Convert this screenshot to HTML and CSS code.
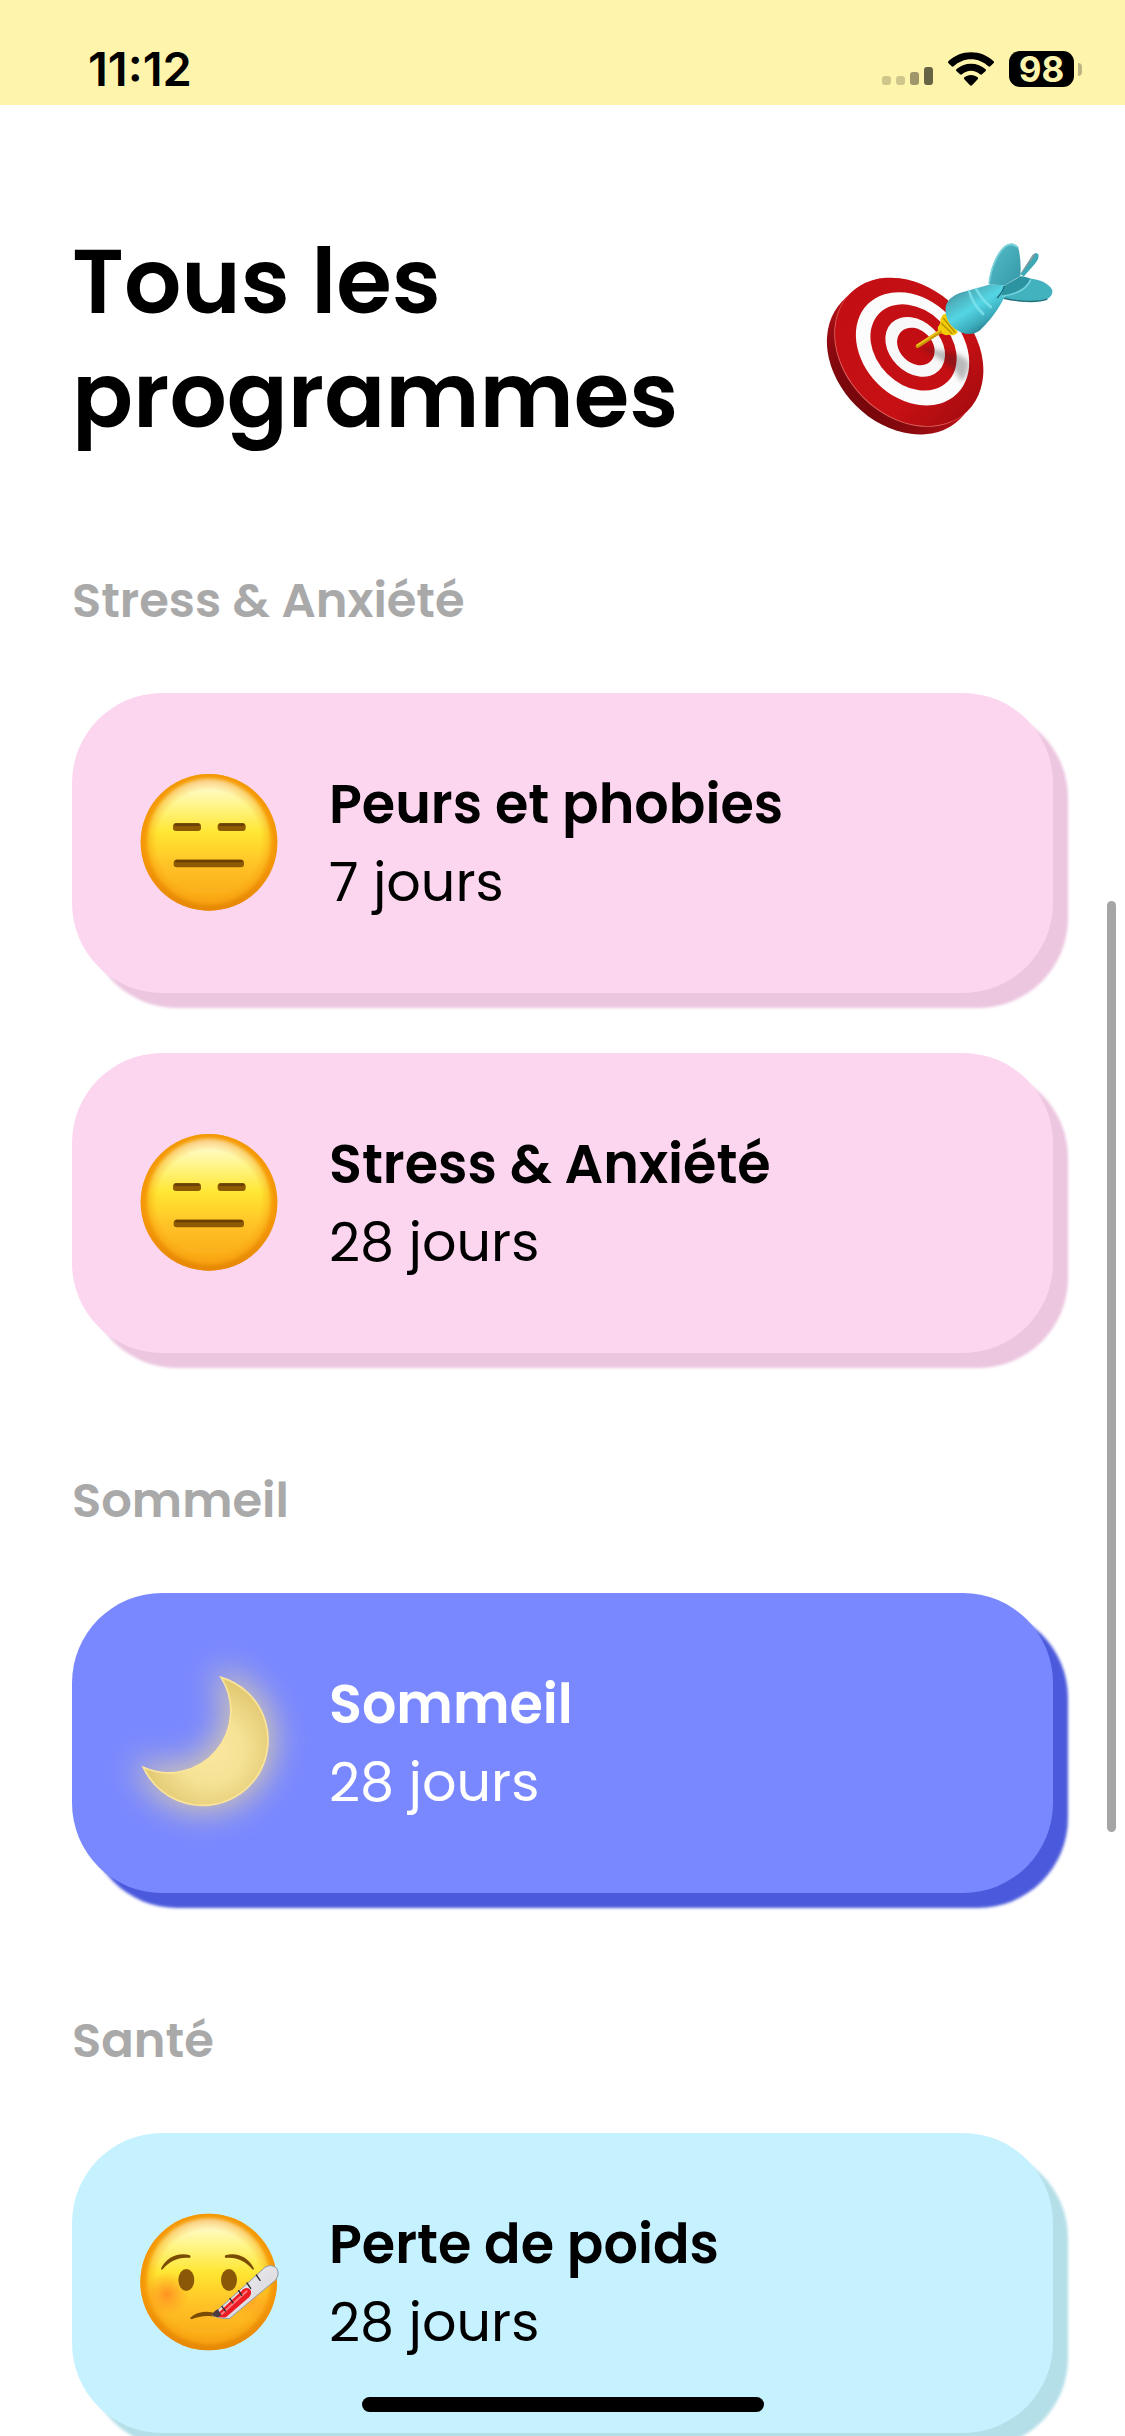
FILE: index.html
```html
<!DOCTYPE html>
<html lang="fr">
<head>
<meta charset="utf-8">
<meta name="viewport" content="width=device-width, initial-scale=1">
<title>Tous les programmes</title>
<link rel="stylesheet" href="styles.css">
</head>
<body>
<div class="status-bar">
  <span class="time">11:12</span>
  <div class="indicators">
    <svg class="signal" viewBox="0 0 51 18" aria-hidden="true">
      <rect x="0" y="9" width="9" height="9" rx="3" fill="#cfc68b"/>
      <rect x="14" y="9" width="9" height="9" rx="3" fill="#cfc68b"/>
      <rect x="28" y="5" width="9" height="13" rx="3" fill="#9f966a"/>
      <rect x="42" y="0" width="9" height="18" rx="3" fill="#676345"/>
    </svg>
    <svg class="wifi" viewBox="264 154 138 102" aria-hidden="true">
      <path d="M333 155C359 155 383 165 401 182Q403 185 401 187L391 197Q388 199 385 197C371 184 353 176 333 176S295 184 281 197Q278 199 275 197L265 187Q263 185 265 182C283 165 307 155 333 155Z"/>
      <path d="M333 189C350 189 365 195 377 206Q379 209 377 211L366 221Q363 223 360 221C352 214 343 210 333 210S314 214 306 221Q303 223 300 221L289 211Q287 209 289 206C301 195 316 189 333 189Z"/>
      <path d="M333 223C341 223 348 226 353 230Q356 233 353 236L336 254Q333 256 330 254L313 236Q310 233 313 230C318 226 325 223 333 223Z"/>
    </svg>
    <div class="battery"><span class="battery-level">98</span><span class="battery-tip"></span></div>
  </div>
</div>

<main class="content">
  <header class="page-header">
    <h1 class="title">Tous les programmes</h1>
    <svg class="target" viewBox="78 60 682 590" aria-hidden="true">
      <defs>
        <linearGradient id="side" x1="0" y1="0" x2="0" y2="1">
          <stop offset="0" stop-color="#b30d12"/><stop offset=".35" stop-color="#d3161b"/><stop offset="1" stop-color="#75060b"/>
        </linearGradient>
        <linearGradient id="front" x1="0" y1="0" x2="1" y2="0">
          <stop offset="0" stop-color="#c30f14"/><stop offset=".7" stop-color="#c61014"/><stop offset="1" stop-color="#a90c10"/>
        </linearGradient>
        <linearGradient id="barrel" gradientUnits="userSpaceOnUse" x1="470" y1="200" x2="550" y2="330">
          <stop offset="0" stop-color="#3b8f9b"/><stop offset=".22" stop-color="#4fb4c0"/><stop offset=".5" stop-color="#54d5e4"/><stop offset=".8" stop-color="#3cadbd"/><stop offset="1" stop-color="#28808e"/>
        </linearGradient>
        <linearGradient id="fin" x1="0" y1="0" x2="1" y2="1">
          <stop offset="0" stop-color="#58bdc9"/><stop offset="1" stop-color="#3499a6"/>
        </linearGradient>
        <clipPath id="board"><ellipse cx="328" cy="392" rx="249" ry="193" transform="rotate(45 328 392)"/></clipPath>
        <filter id="soft"><feGaussianBlur stdDeviation="8"/></filter>
      </defs>
      <g fill="url(#side)">
        <ellipse cx="304" cy="417" rx="250" ry="193" transform="rotate(45 304 417)"/>
        <ellipse cx="315" cy="405" rx="250" ry="193" transform="rotate(45 315 405)"/>
      </g>
      <ellipse cx="326" cy="394" rx="250" ry="193" transform="rotate(45 326 394)" fill="#e1605f"/>
      <ellipse cx="328" cy="392" rx="249" ry="193" transform="rotate(45 328 392)" fill="url(#front)"/>
      <ellipse cx="338" cy="383" rx="190" ry="148" transform="rotate(45 338 383)" fill="#fcfcfc"/>
      <ellipse cx="341" cy="379" rx="145" ry="112" transform="rotate(45 341 379)" fill="#c40f14"/>
      <ellipse cx="346" cy="377" rx="101" ry="77" transform="rotate(45 346 377)" fill="#f8f8f8"/>
      <ellipse cx="348" cy="376" rx="63" ry="49" transform="rotate(45 348 376)" fill="#c20e13"/>
      <g clip-path="url(#board)"><path d="M354 376L420 388C455 395 500 400 508 430Q505 460 485 482Q465 440 415 410Z" fill="#222" opacity=".3" filter="url(#soft)"/></g>
      <path d="M428 282Q436 274 446 280L474 334Q464 346 448 341Q436 345 428 338Q412 334 414 318Q424 304 422 294Z" fill="#f2cd08"/>
      <path d="M424 306L458 338M430 290L466 334" stroke="#b38c00" stroke-width="4" fill="none"/>
      <path d="M353 375L420 332" stroke="#c79a05" stroke-width="11" stroke-linecap="round"/>
      <path d="M352 372L420 328" stroke="#f2c51c" stroke-width="5" stroke-linecap="round"/>
      <path d="M662 158L700 100Q710 90 716 100Q719 112 704 130L672 166Z" fill="#3da9b5"/>
      <path d="M662 158L700 100L708 99L672 148Z" fill="#8c9a9d"/>
      <path d="M568 190C570 145 590 95 615 74Q640 58 655 78C662 100 664 135 662 164L615 192Z" fill="url(#fin)"/>
      <path d="M568 188C572 142 594 93 617 75Q638 62 653 78" fill="none" stroke="#7bd2dc" stroke-width="5"/>
      <path d="M690 172C720 174 748 188 757 205Q762 222 742 234C705 246 645 240 612 231L625 206Z" fill="#42b2be"/>
      <path d="M612 231C650 240 710 246 743 234" fill="none" stroke="#246f7a" stroke-width="4"/>
      <path d="M437 268C436 240 455 222 490 212L570 190L616 192L614 228C598 262 568 302 540 328Q515 346 485 334C455 322 438 298 437 268Z" fill="url(#barrel)"/>
      <path d="M508 210Q520 252 550 278M529 203Q548 238 573 257" fill="none" stroke="#7fe4ee" stroke-width="8" stroke-linecap="round" opacity=".8"/>
      <path d="M616 192L662 165Q682 166 694 174C684 204 646 222 604 226Z" fill="#2c93a0"/>
      <path d="M606 225C645 220 681 204 693 175" fill="none" stroke="#77d5df" stroke-width="5"/>
      <path d="M614 194Q608 215 592 230" fill="none" stroke="#1c6570" stroke-width="4"/>
    </svg>
  </header>

  <section class="group">
    <h2 class="group-title">Stress &amp; Anxiété</h2>
    <a class="card card-pink" href="#phobies">
      <svg class="icon" viewBox="0 0 432 432" aria-hidden="true">
        <defs>
          <linearGradient id="rim" x1="0" y1="0" x2="0" y2="1">
            <stop offset="0" stop-color="#fbb106"/><stop offset=".6" stop-color="#fba80f"/><stop offset="1" stop-color="#d98204"/>
          </linearGradient>
          <linearGradient id="skin" x1="0" y1="0" x2="0" y2="1">
            <stop offset="0" stop-color="#fffce4"/><stop offset=".2" stop-color="#fff68f"/><stop offset=".43" stop-color="#ffe631"/><stop offset=".7" stop-color="#ffc026"/><stop offset="1" stop-color="#f9a714"/>
          </linearGradient>
          <radialGradient id="edge">
            <stop offset=".76" stop-color="#f79a08" stop-opacity="0"/><stop offset="1" stop-color="#ef8a04" stop-opacity=".7"/>
          </radialGradient>
          <filter id="blend" x="-10%" y="-10%" width="120%" height="120%"><feGaussianBlur stdDeviation="5"/></filter>
          <g id="face">
            <circle cx="216" cy="214" r="205" fill="url(#rim)"/>
            <ellipse cx="216" cy="212" rx="186" ry="190" fill="url(#skin)" filter="url(#blend)"/>
            <circle cx="216" cy="214" r="205" fill="url(#edge)"/>
          </g>
          <g id="neutral">
            <use href="#face"/>
            <g fill="#8d5a02">
              <rect x="108" y="157" width="84" height="23" rx="9"/>
              <rect x="242" y="157" width="84" height="23" rx="9"/>
              <rect x="110" y="266" width="211" height="23" rx="9"/>
            </g>
            <g fill="#6a3f00">
              <rect x="112" y="157" width="76" height="8" rx="4"/>
              <rect x="246" y="157" width="76" height="8" rx="4"/>
              <rect x="114" y="266" width="203" height="8" rx="4"/>
            </g>
          </g>
        </defs>
        <use href="#neutral"/>
      </svg>
      <span class="card-text"><strong class="card-name">Peurs et phobies</strong><span class="card-length">7 jours</span></span>
    </a>
    <a class="card card-pink" href="#stress">
      <svg class="icon" viewBox="0 0 432 432" aria-hidden="true"><use href="#neutral"/></svg>
      <span class="card-text"><strong class="card-name">Stress &amp; Anxiété</strong><span class="card-length">28 jours</span></span>
    </a>
  </section>

  <section class="group">
    <h2 class="group-title">Sommeil</h2>
    <a class="card card-blue" href="#sommeil">
      <svg class="icon" viewBox="51 93 432 432" aria-hidden="true">
        <defs>
          <radialGradient id="moon" gradientUnits="userSpaceOnUse" cx="270" cy="330" r="200">
            <stop offset="0" stop-color="#fbe8a0"/><stop offset=".5" stop-color="#f5e295"/><stop offset="1" stop-color="#e3ca74"/>
          </radialGradient>
          <filter id="glow" filterUnits="userSpaceOnUse" x="-150" y="-100" width="820" height="820" color-interpolation-filters="sRGB"><feGaussianBlur stdDeviation="48"/></filter>
          <path id="crescent" d="M303 112A196 196 0 1 1 70 382A186 186 0 0 0 303 112Z"/>
        </defs>
        <use href="#crescent" fill="#f0dc96" stroke="#f0dc96" stroke-width="40" stroke-linejoin="round" opacity=".75" filter="url(#glow)"/>
        <use href="#crescent" fill="url(#moon)" stroke="#fbe59b" stroke-width="5"/>
      </svg>
      <span class="card-text"><strong class="card-name">Sommeil</strong><span class="card-length">28 jours</span></span>
    </a>
  </section>

  <section class="group">
    <h2 class="group-title">Santé</h2>
    <a class="card card-cyan" href="#poids">
      <svg class="icon" viewBox="21 33 432 432" aria-hidden="true">
        <defs>
          <radialGradient id="blush"><stop offset="0" stop-color="#ff7a1e" stop-opacity=".7"/><stop offset="1" stop-color="#ff8a1e" stop-opacity="0"/></radialGradient>
          <linearGradient id="glass" x1="0" y1="0" x2="1" y2="1"><stop offset="0" stop-color="#f4f4f6"/><stop offset=".6" stop-color="#dedee3"/><stop offset="1" stop-color="#a3a7b0"/></linearGradient>
        </defs>
        <use href="#face" x="20" y="32"/>
        <circle cx="110" cy="282" r="66" fill="url(#blush)"/>
        <circle cx="362" cy="300" r="60" fill="url(#blush)" opacity=".6"/>
        <g fill="#7a4b03">
          <path d="M93 206C108 172 145 155 180 166Q184 172 178 174C145 171 120 183 98 208Q93 210 93 206Z"/>
          <path d="M372 206C357 172 320 155 286 166Q282 172 288 174C320 171 345 183 367 208Q373 210 372 206Z"/>
          <path d="M180 354C200 334 230 330 262 341L262 351C232 345 205 349 184 358Z"/>
        </g>
        <ellipse cx="169" cy="240" rx="24" ry="33" fill="#8a5806"/>
        <ellipse cx="297" cy="240" rx="24" ry="33" fill="#8a5806"/>
        <path d="M246 346L405 202Q425 190 440 205Q450 222 437 240L298 356Q268 357 246 346Z" fill="url(#glass)" stroke="#9097a2" stroke-width="3"/>
        <path d="M256 347L340 268Q352 260 361 269Q367 280 357 292L288 352Q268 354 256 347Z" fill="#ed1b24"/>
        <path d="M275 342L350 274" stroke="#ff7a7d" stroke-width="6" stroke-linecap="round"/>
        <path d="M246 346Q252 332 264 328L274 346L262 352Z" fill="#4b3d42"/>
        <path d="M276 319L286 333M300 295L309 309M326 272L335 286M351 249L362 265M379 225L390 241" stroke="#2b2b30" stroke-width="4" stroke-linecap="round"/>
      </svg>
      <span class="card-text"><strong class="card-name">Perte de poids</strong><span class="card-length">28 jours</span></span>
    </a>
  </section>
</main>

<div class="scroll-thumb"></div>
<div class="home-indicator"></div>
</body>
</html>
```
FILE: styles.css
```css
* {
  box-sizing: border-box;
}

body {
  margin: 0;
  height: 100vh;
  display: flex;
  flex-direction: column;
  background: #fff;
  color: #000;
  font-family: Poppins, Inter, "Liberation Sans", sans-serif;
}

/* Status bar */
.status-bar {
  flex: none;
  display: flex;
  justify-content: space-between;
  align-items: flex-end;
  height: 105px;
  padding: 0 43px 18px 88px;
  background: #fff4ac;
  font-family: Inter, "Liberation Sans", sans-serif;
}

.time {
  font-size: 47px;
  font-weight: 600;
  line-height: 36px;
}

.indicators {
  display: flex;
  align-items: center;
  gap: 15px;
}

.signal {
  width: 51px;
  height: 18px;
  align-self: flex-end;
  margin-bottom: 2px;
}

.wifi {
  width: 46px;
  height: 34px;
}

.battery {
  display: flex;
  align-items: center;
  gap: 4px;
}

.battery-level {
  width: 65px;
  border-radius: 11px;
  background: #000;
  color: #fff4ac;
  font-size: 35px;
  font-weight: 700;
  line-height: 36px;
  text-align: center;
}

.battery-tip {
  width: 4px;
  height: 13px;
  border-radius: 0 4px 4px 0;
  background: #bdb582;
}

/* Scrolling content */
.content {
  flex: 1;
  min-height: 0;
  overflow-y: auto;
  scrollbar-width: none;
  padding: 120px 72px 60px;
}

.page-header {
  display: flex;
  justify-content: space-between;
  align-items: center;
}

.title {
  margin: 0;
  max-width: 660px;
  font-size: 90px;
  font-weight: 600;
  line-height: 114px;
}

.target {
  flex: none;
  width: 227px;
  height: 197px;
}

.group {
  display: flex;
  flex-direction: column;
  gap: 60px;
  padding-top: 116px;
}

.group-title {
  margin: 0;
  color: #a9a9a9;
  font-size: 48px;
  font-weight: 600;
  line-height: 64px;
}

.card {
  display: flex;
  align-items: center;
  gap: 48px;
  min-height: 300px;
  padding: 48px 65px;
  border-radius: 90px;
  color: #000;
  text-decoration: none;
}

.card-pink {
  background: #fcd6ee;
  box-shadow: 15px 15px 3px #ecc5df;
}

.card-blue {
  background: #7a88ff;
  box-shadow: 15px 15px 3px #4b5adc;
  color: #fff;
}

.card-cyan {
  background: #c6f2ff;
  box-shadow: 15px 15px 3px #b5dfe8;
}

.icon {
  flex: none;
  width: 144px;
  height: 144px;
  overflow: visible;
}

.card-text {
  display: flex;
  flex-direction: column;
  font-size: 54px;
  line-height: 78px;
}

.card-name {
  font-weight: 600;
}

/* Overlays */
.scroll-thumb {
  position: fixed;
  top: 37%;
  right: 9px;
  width: 9px;
  height: 931px;
  border-radius: 5px;
  background: #a5a5a5;
}

.home-indicator {
  position: fixed;
  bottom: 24px;
  left: 50%;
  width: 402px;
  height: 15px;
  border-radius: 8px;
  background: #000;
  transform: translateX(-50%);
}
```
